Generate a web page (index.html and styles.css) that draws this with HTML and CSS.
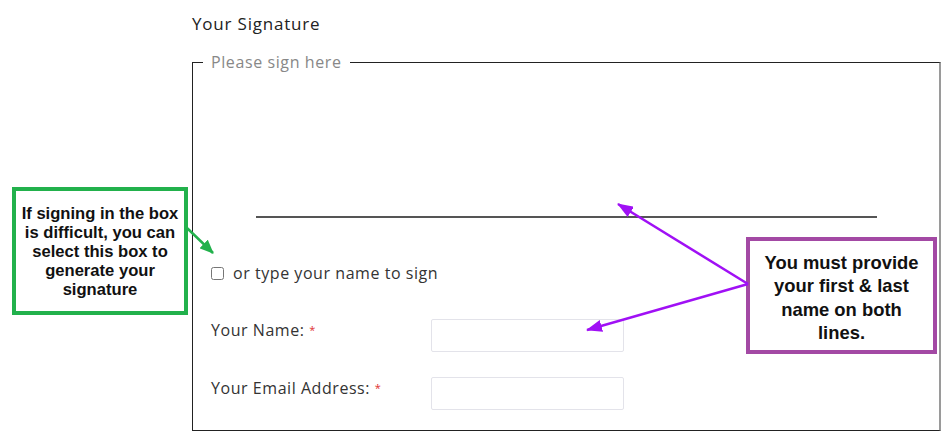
FILE: index.html
```html
<!DOCTYPE html>
<html lang="en">
<head>
  <meta charset="UTF-8">
  <title>Your Signature</title>
  <link rel="stylesheet" href="styles.css">
</head>
<body>
  <div class="page">
    <div class="sig-title">Your Signature</div>

    <fieldset class="sig-box">
      <legend>Please sign here</legend>
      <div class="sig-inner">
        <div class="sig-pad"></div>

        <label class="type-row">
          <input type="checkbox" class="type-check">
          <span>or type your name to sign</span>
        </label>

        <div class="form-grid">
          <div class="form-label">Your Name: <span class="req">*</span></div>
          <input type="text" class="form-input">
          <div class="form-label">Your Email Address: <span class="req">*</span></div>
          <input type="text" class="form-input">
        </div>
      </div>
    </fieldset>
  </div>

  <!-- callouts drawn on top of the form -->
  <div class="note note-green">If signing in the box is difficult, you can select this box to generate your signature</div>
  <div class="note note-purple">You must provide your first &amp; last name on both lines.</div>

  <svg class="arrows" width="950" height="440" viewBox="0 0 950 440">
    <defs>
      <marker id="headGreen" markerUnits="userSpaceOnUse" markerWidth="14" markerHeight="12" refX="13" refY="6" orient="auto">
        <path d="M0,0 L14,6 L0,12 z" fill="#22b14c"/>
      </marker>
      <marker id="headPurple" markerUnits="userSpaceOnUse" markerWidth="16" markerHeight="12" refX="15" refY="6" orient="auto">
        <path d="M0,0 L16,6 L0,12 z" fill="#a010f5"/>
      </marker>
    </defs>
    <line x1="187" y1="228" x2="213" y2="253" stroke="#22b14c" stroke-width="2.5" marker-end="url(#headGreen)"/>
    <line x1="748" y1="284" x2="618" y2="204" stroke="#a010f5" stroke-width="2.5" marker-end="url(#headPurple)"/>
    <line x1="748" y1="284" x2="587" y2="330" stroke="#a010f5" stroke-width="2.5" marker-end="url(#headPurple)"/>
  </svg>
</body>
</html>
```

FILE: styles.css
```css
html, body {
  margin: 0;
  padding: 0;
  background: #fff;
  font-family: "Open Sans", "Noto Sans", sans-serif;
  color: #222;
}
.page {
  padding: 13px 0 0 192px;
  width: 749px;
}
.sig-title {
  font-size: 17px;
  letter-spacing: 0.8px;
  line-height: 22px;
  margin-bottom: 17px;
}
.sig-box {
  margin: 0;
  padding: 0 0 20px 10px;
  border: 1px solid #222;
  border-right: 2px solid #9a9a9a;
  min-width: 0;
}
.sig-box legend {
  padding: 0 8px;
  font-size: 16px;
  letter-spacing: 0.6px;
  line-height: 20px;
  color: #888;
}
.sig-inner {
  padding-left: 8px;
}
.sig-pad {
  height: 144px;
  margin: 0 62px 0 45px;
  border-bottom: 2px solid #555;
}
.type-row {
  display: flex;
  align-items: center;
  margin-top: 44px;
  font-size: 16px;
  letter-spacing: 0.55px;
  line-height: 22px;
  color: #333;
}
.type-check {
  width: 13px;
  height: 13px;
  margin: 0 9px 0 0;
}
.form-grid {
  display: grid;
  grid-template-columns: 220px 193px;
  row-gap: 25px;
  margin-top: 35px;
}
.form-label {
  font-size: 16px;
  letter-spacing: 0.55px;
  line-height: 20px;
  padding-top: 1px;
  color: #333;
}
.req {
  color: #e03030;
  font-size: 11px;
  vertical-align: top;
}
.form-input {
  width: 193px;
  height: 33px;
  box-sizing: border-box;
  margin: 0;
  border: 1px solid #e3e3ea;
  border-radius: 2px;
}
.note {
  position: absolute;
  box-sizing: border-box;
  display: flex;
  align-items: center;
  justify-content: center;
  text-align: center;
  background: #fff;
  font-family: "Liberation Sans", Arial, sans-serif;
  font-weight: bold;
  color: #111;
}
.note-green {
  left: 12px;
  top: 187px;
  width: 176px;
  height: 128px;
  padding: 0 4px;
  border: 4px solid #22b14c;
  font-size: 16.6px;
  line-height: 19px;
}
.note-purple {
  left: 746px;
  top: 237px;
  width: 191px;
  height: 117px;
  padding: 4px 8px 0;
  border: 4px solid #a349a4;
  font-size: 18.4px;
  line-height: 23.5px;
}
.arrows {
  position: absolute;
  left: 0;
  top: 0;
  pointer-events: none;
}
```
